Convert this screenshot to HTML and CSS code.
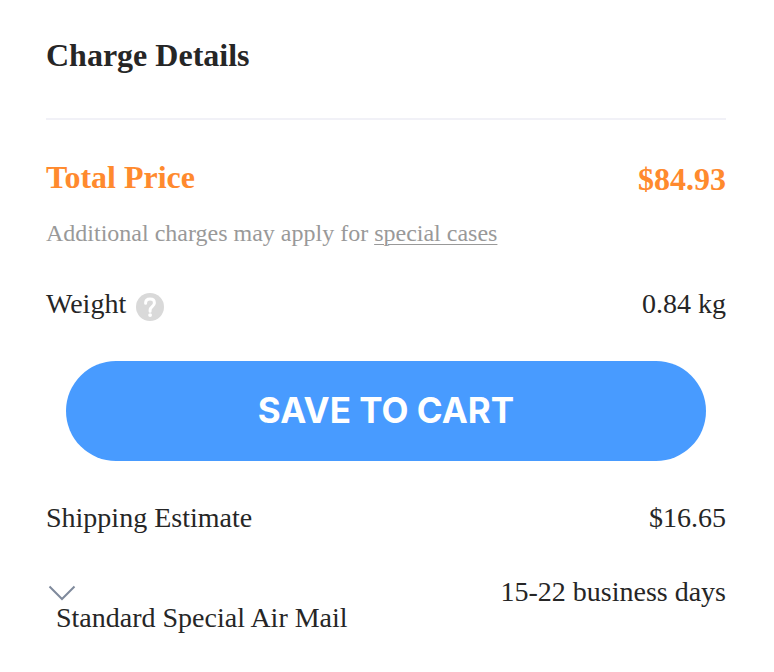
FILE: index.html
```html
<!DOCTYPE html>
<html lang="en">
<head>
<meta charset="utf-8">
<meta name="viewport" content="width=device-width, initial-scale=1">
<title>Charge Details</title>
<link rel="stylesheet" href="styles.css">
</head>
<body>
<main class="charges">
  <h1 class="title">Charge Details</h1>
  <section class="total">
    <div class="row"><h2 class="total-label">Total Price</h2><strong class="total-value">$84.93</strong></div>
    <p class="note">Additional charges may apply for <a href="#special">special cases</a></p>
  </section>
  <div class="row weight">
    <span class="with-help">Weight
      <button class="help" type="button" aria-label="About weight">
        <svg viewBox="0 0 28 28" aria-hidden="true"><circle cx="14" cy="14" r="14" fill="#d9d9d9"/><path d="M9.600 10.300c0-2.700 1.800-4.200 4.400-4.200s4.400 1.500 4.400 3.900c0 3.500-4.300 3.800-4.300 7v1.200" fill="none" stroke="#fff" stroke-width="3" stroke-linecap="round"/><circle cx="14.100" cy="22.100" r="1.900" fill="#fff"/></svg>
      </button>
    </span>
    <span>0.84 kg</span>
  </div>
  <button class="save" type="button">SAVE TO CART</button>
  <div class="row"><span>Shipping Estimate</span><span>$16.65</span></div>
  <div class="row method">
    <button class="method-toggle" type="button">
      <svg class="chevron" viewBox="0 0 28 16" aria-hidden="true"><path d="M1.500 1.500L14 14L26.500 1.500" fill="none" stroke="#7f8a9c" stroke-width="2"/></svg>
      <span class="method-name">Standard Special Air Mail</span>
    </button>
    <span>15-22 business days</span>
  </div>
</main>
</body>
</html>
```
FILE: styles.css
```css
* {
  box-sizing: border-box;
}

body {
  margin: 0;
  background: #fff;
  color: #262626;
  font-family: "Liberation Serif", "Times New Roman", serif;
  font-size: 28px;
  line-height: 32px;
}

button {
  padding: 0;
  border: 0;
  background: none;
  color: inherit;
  font: inherit;
  cursor: pointer;
}

h1, h2, p {
  margin: 0;
}

.charges {
  padding: 35px 48px 36px 46px;
}

.title {
  padding-bottom: 43px;
  border-bottom: 2px solid #f1f1f7;
  font-size: 32px;
  line-height: 40px;
}

.row {
  display: flex;
  justify-content: space-between;
}

.total {
  padding-top: 37px;
  color: #ff8a2e;
}

.total-label,
.total-value {
  font-size: 32px;
  line-height: 40px;
}

.total-value {
  line-height: 44px;
}

.note {
  padding-top: 16px;
  color: #999;
  font-size: 24px;
  line-height: 32px;
}

.note a {
  color: inherit;
  text-decoration-thickness: 1px;
  text-underline-offset: 3px;
}

.weight {
  padding-top: 39px;
}

.with-help {
  display: flex;
  gap: 10px;
}

.help {
  padding-top: 5px;
}

.help svg {
  display: block;
  width: 28px;
  height: 28px;
}

.save {
  display: block;
  width: calc(100% - 40px);
  height: 100px;
  margin: 40px 20px 41px;
  padding-bottom: 2px;
  border-radius: 50px;
  background: #489bff;
  color: #fff;
  font: 700 35px/44px Inter, sans-serif;
}

.method {
  padding-top: 42px;
}

.method-toggle {
  padding-top: 9px;
  text-align: left;
}

.chevron {
  display: block;
  width: 28px;
  height: 16px;
  margin: 0 2px;
}

.method-name {
  display: block;
  padding: 1px 0 0 10px;
}
```
